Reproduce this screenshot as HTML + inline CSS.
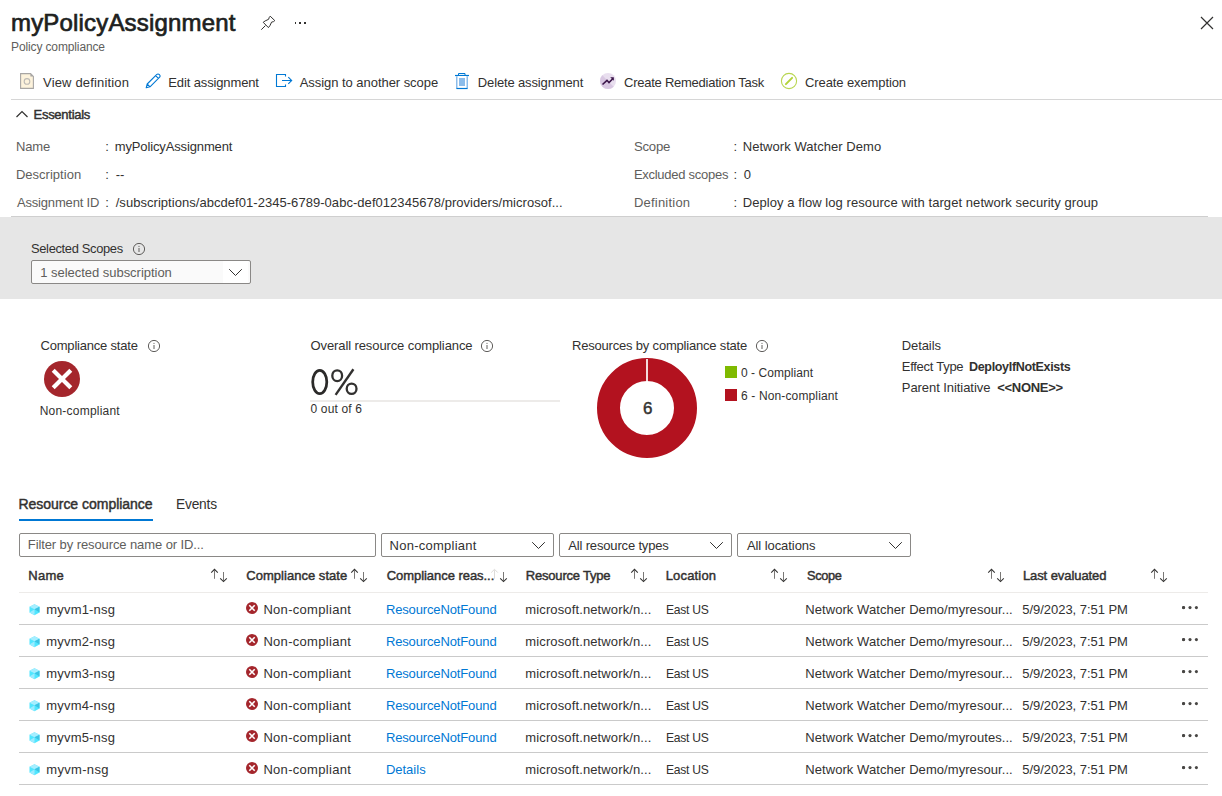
<!DOCTYPE html>
<html><head><meta charset="utf-8"><style>
html,body{margin:0;padding:0;width:1222px;height:796px;overflow:hidden;background:#fff;font-family:"Liberation Sans",sans-serif;position:relative}
.t{position:absolute;white-space:pre;line-height:normal}
.a{position:absolute}
</style></head><body>
<!-- gray band -->
<div class="a" style="left:0;top:217px;width:1222px;height:82px;background:#E6E6E6"></div>
<!-- essentials bottom line -->
<div class="a" style="left:11px;top:216px;width:1197px;height:1px;background:#CFCFCF"></div>
<!-- toolbar line -->
<div class="a" style="left:11px;top:99px;width:1211px;height:1px;background:#D6D6D6"></div>
<!-- close X -->
<svg class="a" style="left:1199px;top:15px" width="16" height="16" viewBox="0 0 16 16"><path d="M2 2L14 14M14 2L2 14" stroke="#323130" stroke-width="1.2"/></svg>
<!-- pin -->
<svg class="a" style="left:260px;top:15px" width="16" height="16" viewBox="0 0 16 16"><path d="M1.3 14.7L5.4 10.6" stroke="#323130" stroke-width="1"/><path d="M10.2 1.2L14.8 5.6L13.6 6.6L11.6 7.1L9.9 10.7L8.4 12.6L3.2 7.3L5.2 5.9L8.6 4.3L9.3 2.3Z" fill="none" stroke="#323130" stroke-width="1" stroke-linejoin="round"/></svg>
<!-- title dots -->
<div class="a" style="left:294.5px;top:22.3px;width:1.7px;height:1.7px;background:#323130"></div>
<div class="a" style="left:299.2px;top:22.3px;width:1.7px;height:1.7px;background:#323130"></div>
<div class="a" style="left:303.9px;top:22.3px;width:1.7px;height:1.7px;background:#323130"></div>
<!-- view definition icon -->
<svg class="a" style="left:19px;top:72px" width="18" height="18" viewBox="0 0 18 18"><path d="M1.6 1.6H11.6L14.4 4.4V16.4H1.6Z" fill="#FDF3DC" stroke="#A8A6A4" stroke-width="1.1"/><path d="M11.4 1.6L14.4 4.6H11.4Z" fill="#A8A6A4"/><circle cx="8" cy="9.4" r="2.8" fill="none" stroke="#BDBAB5" stroke-width="1.1"/></svg>
<!-- pencil -->
<svg class="a" style="left:145px;top:73px" width="16" height="16" viewBox="0 0 16 16"><path d="M1.2 14.8L2.2 11L11.6 1.6A1.6 1.6 0 0 1 14.4 4.4L5 13.8Z M2.2 11L5 13.8 M10.6 2.6L13.4 5.4" fill="none" stroke="#0078D4" stroke-width="1.1" stroke-linejoin="round"/></svg>
<!-- assign -->
<svg class="a" style="left:275px;top:73px" width="19" height="16" viewBox="0 0 19 16"><path d="M10.5 3.6V1.5H1.5V13.5H10.5V11.4" fill="none" stroke="#0078D4" stroke-width="1.1"/><path d="M7 7.5H16.6M13.3 4.1L16.7 7.5L13.3 10.9" fill="none" stroke="#0078D4" stroke-width="1.1"/></svg>
<!-- trash -->
<svg class="a" style="left:454px;top:72px" width="16" height="18" viewBox="0 0 16 18"><path d="M4.5 3V1.5H11V3" fill="none" stroke="#0078D4" stroke-width="1"/><path d="M1 3.5H15" stroke="#0078D4" stroke-width="1.2"/><rect x="2" y="4" width="12" height="13" rx="1" fill="#8CBCEA"/><rect x="3.5" y="4" width="9" height="12" fill="#fff"/><rect x="5" y="6" width="6" height="8" fill="#8CBCEA"/><path d="M2.5 16.5H13.5" stroke="#0078D4" stroke-width="1.2"/></svg>
<!-- remediation -->
<svg class="a" style="left:599px;top:72px" width="18" height="18" viewBox="0 0 18 18"><circle cx="9" cy="9" r="8" fill="#E9DFEF"/><path d="M3.34 3.34A8 8 0 0 0 14.66 14.66Z" fill="#D9C8E2"/><path d="M3.5 12.5L8 8.3L10 10.5L14 6.5" fill="none" stroke="#3B1549" stroke-width="1.6"/><path d="M11.2 5.2H14.8V8.8Z" fill="#3B1549"/></svg>
<!-- exemption -->
<svg class="a" style="left:780px;top:72px" width="18" height="18" viewBox="0 0 18 18"><circle cx="9" cy="9" r="7.6" fill="none" stroke="#B8D650" stroke-width="1.1"/><path d="M5.9 12.1L12.1 5.9" stroke="#B2D33A" stroke-width="2" stroke-linecap="round"/></svg>
<!-- essentials chevron -->
<svg class="a" style="left:15px;top:107.5px" width="14" height="12" viewBox="0 0 14 12"><path d="M1.5 9L7 3.5L12.5 9" fill="none" stroke="#323130" stroke-width="1.2"/></svg>
<!-- selected scopes info -->
<svg class="a" style="left:132px;top:242px" width="14" height="14" viewBox="0 0 14 14"><circle cx="7" cy="7" r="5.6" fill="none" stroke="#605E5C" stroke-width="1"/><path d="M7 6V10" stroke="#605E5C" stroke-width="1"/><circle cx="7" cy="4.3" r="0.6" fill="#605E5C"/></svg>
<!-- scope dropdown -->
<div class="a" style="left:31px;top:260px;width:218px;height:22px;border:1px solid #8A8886;border-radius:2px;background:#FAFAFA"></div>
<div class="a" style="left:223px;top:261px;width:25px;height:22px;background:#fff;border-radius:0 1px 1px 0"></div>
<svg class="a" style="left:228px;top:266px" width="16" height="12" viewBox="0 0 16 12"><path d="M1.2 3.2L7.5 9.5L13.8 3.2" fill="none" stroke="#323130" stroke-width="1"/></svg>
<!-- compliance info icons -->
<svg class="a" style="left:147px;top:339px" width="14" height="14" viewBox="0 0 14 14"><circle cx="7" cy="7" r="5.6" fill="none" stroke="#605E5C" stroke-width="1"/><path d="M7 6V10" stroke="#605E5C" stroke-width="1"/><circle cx="7" cy="4.3" r="0.6" fill="#605E5C"/></svg>
<svg class="a" style="left:480px;top:339px" width="14" height="14" viewBox="0 0 14 14"><circle cx="7" cy="7" r="5.6" fill="none" stroke="#605E5C" stroke-width="1"/><path d="M7 6V10" stroke="#605E5C" stroke-width="1"/><circle cx="7" cy="4.3" r="0.6" fill="#605E5C"/></svg>
<svg class="a" style="left:755px;top:339px" width="14" height="14" viewBox="0 0 14 14"><circle cx="7" cy="7" r="5.6" fill="none" stroke="#605E5C" stroke-width="1"/><path d="M7 6V10" stroke="#605E5C" stroke-width="1"/><circle cx="7" cy="4.3" r="0.6" fill="#605E5C"/></svg>
<!-- big error -->
<svg class="a" style="left:44px;top:361px" width="36" height="36" viewBox="0 0 36 36"><circle cx="18" cy="18" r="18" fill="#A4262C"/><path d="M9.2 9.2L26.8 26.8M26.8 9.2L9.2 26.8" stroke="#fff" stroke-width="4.2"/></svg>
<!-- progress bar -->
<div class="a" style="left:310px;top:400px;width:250px;height:2px;background:#EDEBE9"></div>
<!-- donut -->
<svg class="a" style="left:597px;top:358px" width="100" height="100" viewBox="0 0 100 100"><circle cx="50" cy="50" r="38.5" fill="none" stroke="#B3121F" stroke-width="23"/><path d="M50 1V26.5" stroke="#fff" stroke-width="1.7"/></svg>
<div class="a" style="left:725px;top:366px;width:12px;height:12px;background:#7FBA00"></div>
<div class="a" style="left:725px;top:389px;width:12px;height:12px;background:#B3121F"></div>
<!-- tab underline -->
<div class="a" style="left:19px;top:519px;width:134px;height:2px;background:#0078D4"></div>
<!-- filter inputs -->
<div class="a" style="left:19px;top:533px;width:355px;height:22px;border:1px solid #8A8886;border-radius:2px"></div>
<div class="a" style="left:381px;top:533px;width:171px;height:22px;border:1px solid #8A8886;border-radius:2px"></div>
<div class="a" style="left:559px;top:533px;width:171px;height:22px;border:1px solid #8A8886;border-radius:2px"></div>
<div class="a" style="left:737px;top:533px;width:172px;height:22px;border:1px solid #8A8886;border-radius:2px"></div>
<svg class="a" style="left:531px;top:539px" width="16" height="12" viewBox="0 0 16 12"><path d="M1.2 3.2L7.5 9.5L13.8 3.2" fill="none" stroke="#323130" stroke-width="1"/></svg>
<svg class="a" style="left:709px;top:539px" width="16" height="12" viewBox="0 0 16 12"><path d="M1.2 3.2L7.5 9.5L13.8 3.2" fill="none" stroke="#323130" stroke-width="1"/></svg>
<svg class="a" style="left:888px;top:539px" width="16" height="12" viewBox="0 0 16 12"><path d="M1.2 3.2L7.5 9.5L13.8 3.2" fill="none" stroke="#323130" stroke-width="1"/></svg>
<svg class="a" style="left:210px;top:568px" width="18" height="15" viewBox="0 0 18 15"><path d="M4.5 2.2V10.8M13.5 4V12.8" fill="none" stroke="#7A7876" stroke-width="1"/><path d="M1.2 4.6L4.5 1.3L7.8 4.6M10.2 10.3L13.5 13.6L16.8 10.3" fill="none" stroke="#323130" stroke-width="1.05"/></svg>
<svg class="a" style="left:350px;top:568px" width="18" height="15" viewBox="0 0 18 15"><path d="M4.5 2.2V10.8M13.5 4V12.8" fill="none" stroke="#7A7876" stroke-width="1"/><path d="M1.2 4.6L4.5 1.3L7.8 4.6M10.2 10.3L13.5 13.6L16.8 10.3" fill="none" stroke="#323130" stroke-width="1.05"/></svg>
<svg class="a" style="left:490px;top:568px" width="18" height="15" viewBox="0 0 18 15"><path d="M4.5 2.2V10.8M1.2 4.6L4.5 1.3L7.8 4.6" fill="none" stroke="#DDDBD9" stroke-width="1"/><path d="M13.5 4V12.8" fill="none" stroke="#7A7876" stroke-width="1"/><path d="M10.2 10.3L13.5 13.6L16.8 10.3" fill="none" stroke="#323130" stroke-width="1.05"/></svg>
<svg class="a" style="left:630px;top:568px" width="18" height="15" viewBox="0 0 18 15"><path d="M4.5 2.2V10.8M13.5 4V12.8" fill="none" stroke="#7A7876" stroke-width="1"/><path d="M1.2 4.6L4.5 1.3L7.8 4.6M10.2 10.3L13.5 13.6L16.8 10.3" fill="none" stroke="#323130" stroke-width="1.05"/></svg>
<svg class="a" style="left:770px;top:568px" width="18" height="15" viewBox="0 0 18 15"><path d="M4.5 2.2V10.8M13.5 4V12.8" fill="none" stroke="#7A7876" stroke-width="1"/><path d="M1.2 4.6L4.5 1.3L7.8 4.6M10.2 10.3L13.5 13.6L16.8 10.3" fill="none" stroke="#323130" stroke-width="1.05"/></svg>
<svg class="a" style="left:987px;top:568px" width="18" height="15" viewBox="0 0 18 15"><path d="M4.5 2.2V10.8M13.5 4V12.8" fill="none" stroke="#7A7876" stroke-width="1"/><path d="M1.2 4.6L4.5 1.3L7.8 4.6M10.2 10.3L13.5 13.6L16.8 10.3" fill="none" stroke="#323130" stroke-width="1.05"/></svg>
<svg class="a" style="left:1150px;top:568px" width="18" height="15" viewBox="0 0 18 15"><path d="M4.5 2.2V10.8M13.5 4V12.8" fill="none" stroke="#7A7876" stroke-width="1"/><path d="M1.2 4.6L4.5 1.3L7.8 4.6M10.2 10.3L13.5 13.6L16.8 10.3" fill="none" stroke="#323130" stroke-width="1.05"/></svg>
<div class="a" style="left:19px;top:592px;width:1189px;height:1px;background:#EDEBE9"></div>
<div class="a" style="left:19px;top:624px;width:1189px;height:1px;background:#CACACA"></div>
<svg class="a" style="left:29px;top:604px" width="12" height="12" viewBox="0 0 12 12"><path d="M5.5 0.3L10.5 2.8V8.6L5.5 11.2L0.5 8.6V2.8Z" fill="#50E6FF"/><path d="M0.5 2.8L5.5 5.3L10.5 2.8L5.5 0.3Z" fill="#A6EEFF"/><path d="M0.5 8.6L5.5 5.3V11.2Z" fill="#9CEBFF"/><path d="M5.5 5.3L10.5 2.8V8.6Z" fill="#3CC3E3"/></svg>
<svg class="a" style="left:246px;top:602px" width="12" height="12" viewBox="0 0 12 12"><circle cx="6" cy="6" r="6" fill="#A4262C"/><path d="M3.3 3.3L8.7 8.7M8.7 3.3L3.3 8.7" stroke="#fff" stroke-width="1.6"/></svg>
<div class="a" style="left:1182.0px;top:606px;width:3px;height:3px;border-radius:50%;background:#323130"></div>


<div class="a" style="left:19px;top:656px;width:1189px;height:1px;background:#CACACA"></div>
<svg class="a" style="left:29px;top:636px" width="12" height="12" viewBox="0 0 12 12"><path d="M5.5 0.3L10.5 2.8V8.6L5.5 11.2L0.5 8.6V2.8Z" fill="#50E6FF"/><path d="M0.5 2.8L5.5 5.3L10.5 2.8L5.5 0.3Z" fill="#A6EEFF"/><path d="M0.5 8.6L5.5 5.3V11.2Z" fill="#9CEBFF"/><path d="M5.5 5.3L10.5 2.8V8.6Z" fill="#3CC3E3"/></svg>
<svg class="a" style="left:246px;top:634px" width="12" height="12" viewBox="0 0 12 12"><circle cx="6" cy="6" r="6" fill="#A4262C"/><path d="M3.3 3.3L8.7 8.7M8.7 3.3L3.3 8.7" stroke="#fff" stroke-width="1.6"/></svg>
<div class="a" style="left:1182.0px;top:638px;width:3px;height:3px;border-radius:50%;background:#323130"></div>


<div class="a" style="left:19px;top:688px;width:1189px;height:1px;background:#CACACA"></div>
<svg class="a" style="left:29px;top:668px" width="12" height="12" viewBox="0 0 12 12"><path d="M5.5 0.3L10.5 2.8V8.6L5.5 11.2L0.5 8.6V2.8Z" fill="#50E6FF"/><path d="M0.5 2.8L5.5 5.3L10.5 2.8L5.5 0.3Z" fill="#A6EEFF"/><path d="M0.5 8.6L5.5 5.3V11.2Z" fill="#9CEBFF"/><path d="M5.5 5.3L10.5 2.8V8.6Z" fill="#3CC3E3"/></svg>
<svg class="a" style="left:246px;top:666px" width="12" height="12" viewBox="0 0 12 12"><circle cx="6" cy="6" r="6" fill="#A4262C"/><path d="M3.3 3.3L8.7 8.7M8.7 3.3L3.3 8.7" stroke="#fff" stroke-width="1.6"/></svg>
<div class="a" style="left:1182.0px;top:670px;width:3px;height:3px;border-radius:50%;background:#323130"></div>


<div class="a" style="left:19px;top:720px;width:1189px;height:1px;background:#CACACA"></div>
<svg class="a" style="left:29px;top:700px" width="12" height="12" viewBox="0 0 12 12"><path d="M5.5 0.3L10.5 2.8V8.6L5.5 11.2L0.5 8.6V2.8Z" fill="#50E6FF"/><path d="M0.5 2.8L5.5 5.3L10.5 2.8L5.5 0.3Z" fill="#A6EEFF"/><path d="M0.5 8.6L5.5 5.3V11.2Z" fill="#9CEBFF"/><path d="M5.5 5.3L10.5 2.8V8.6Z" fill="#3CC3E3"/></svg>
<svg class="a" style="left:246px;top:698px" width="12" height="12" viewBox="0 0 12 12"><circle cx="6" cy="6" r="6" fill="#A4262C"/><path d="M3.3 3.3L8.7 8.7M8.7 3.3L3.3 8.7" stroke="#fff" stroke-width="1.6"/></svg>
<div class="a" style="left:1182.0px;top:702px;width:3px;height:3px;border-radius:50%;background:#323130"></div>


<div class="a" style="left:19px;top:752px;width:1189px;height:1px;background:#CACACA"></div>
<svg class="a" style="left:29px;top:732px" width="12" height="12" viewBox="0 0 12 12"><path d="M5.5 0.3L10.5 2.8V8.6L5.5 11.2L0.5 8.6V2.8Z" fill="#50E6FF"/><path d="M0.5 2.8L5.5 5.3L10.5 2.8L5.5 0.3Z" fill="#A6EEFF"/><path d="M0.5 8.6L5.5 5.3V11.2Z" fill="#9CEBFF"/><path d="M5.5 5.3L10.5 2.8V8.6Z" fill="#3CC3E3"/></svg>
<svg class="a" style="left:246px;top:730px" width="12" height="12" viewBox="0 0 12 12"><circle cx="6" cy="6" r="6" fill="#A4262C"/><path d="M3.3 3.3L8.7 8.7M8.7 3.3L3.3 8.7" stroke="#fff" stroke-width="1.6"/></svg>
<div class="a" style="left:1182.0px;top:734px;width:3px;height:3px;border-radius:50%;background:#323130"></div>


<div class="a" style="left:19px;top:784px;width:1189px;height:1px;background:#CACACA"></div>
<svg class="a" style="left:29px;top:764px" width="12" height="12" viewBox="0 0 12 12"><path d="M5.5 0.3L10.5 2.8V8.6L5.5 11.2L0.5 8.6V2.8Z" fill="#50E6FF"/><path d="M0.5 2.8L5.5 5.3L10.5 2.8L5.5 0.3Z" fill="#A6EEFF"/><path d="M0.5 8.6L5.5 5.3V11.2Z" fill="#9CEBFF"/><path d="M5.5 5.3L10.5 2.8V8.6Z" fill="#3CC3E3"/></svg>
<svg class="a" style="left:246px;top:762px" width="12" height="12" viewBox="0 0 12 12"><circle cx="6" cy="6" r="6" fill="#A4262C"/><path d="M3.3 3.3L8.7 8.7M8.7 3.3L3.3 8.7" stroke="#fff" stroke-width="1.6"/></svg>
<div class="a" style="left:1182.0px;top:766px;width:3px;height:3px;border-radius:50%;background:#323130"></div>


<svg class="a" style="left:1180px;top:603px" width="20" height="9" viewBox="0 0 20 9"><circle cx="3.6" cy="4.6" r="1.55" fill="#484644"/><circle cx="10" cy="4.6" r="1.55" fill="#484644"/><circle cx="16.4" cy="4.6" r="1.55" fill="#484644"/></svg>
<svg class="a" style="left:1180px;top:635px" width="20" height="9" viewBox="0 0 20 9"><circle cx="3.6" cy="4.6" r="1.55" fill="#484644"/><circle cx="10" cy="4.6" r="1.55" fill="#484644"/><circle cx="16.4" cy="4.6" r="1.55" fill="#484644"/></svg>
<svg class="a" style="left:1180px;top:667px" width="20" height="9" viewBox="0 0 20 9"><circle cx="3.6" cy="4.6" r="1.55" fill="#484644"/><circle cx="10" cy="4.6" r="1.55" fill="#484644"/><circle cx="16.4" cy="4.6" r="1.55" fill="#484644"/></svg>
<svg class="a" style="left:1180px;top:699px" width="20" height="9" viewBox="0 0 20 9"><circle cx="3.6" cy="4.6" r="1.55" fill="#484644"/><circle cx="10" cy="4.6" r="1.55" fill="#484644"/><circle cx="16.4" cy="4.6" r="1.55" fill="#484644"/></svg>
<svg class="a" style="left:1180px;top:731px" width="20" height="9" viewBox="0 0 20 9"><circle cx="3.6" cy="4.6" r="1.55" fill="#484644"/><circle cx="10" cy="4.6" r="1.55" fill="#484644"/><circle cx="16.4" cy="4.6" r="1.55" fill="#484644"/></svg>
<svg class="a" style="left:1180px;top:763px" width="20" height="9" viewBox="0 0 20 9"><circle cx="3.6" cy="4.6" r="1.55" fill="#484644"/><circle cx="10" cy="4.6" r="1.55" fill="#484644"/><circle cx="16.4" cy="4.6" r="1.55" fill="#484644"/></svg>
<svg class="a" style="left:305px;top:362px" width="60" height="40" viewBox="0 0 60 40"><ellipse cx="14.75" cy="20.05" rx="7.05" ry="11.65" fill="none" stroke="#2B2A29" stroke-width="2.75"/><ellipse cx="32.2" cy="13.7" rx="4.9" ry="5.4" fill="none" stroke="#323130" stroke-width="2.3"/><ellipse cx="46.6" cy="26.75" rx="4.9" ry="5.2" fill="none" stroke="#323130" stroke-width="2.3"/><path d="M48.4 7.2L30.6 32.9" stroke="#323130" stroke-width="2.4"/></svg>

<span class="t" style="left:11.00px;top:9.08px;font-size:24px;font-weight:400;color:#201F1E;-webkit-text-stroke:0.70px #201F1E;letter-spacing:0.176px;">myPolicyAssignment</span>
<span class="t" style="left:11.00px;top:40.14px;font-size:12px;font-weight:400;color:#605E5C;letter-spacing:-0.125px;">Policy compliance</span>
<span class="t" style="left:43.10px;top:75.23px;font-size:13px;font-weight:400;color:#323130;letter-spacing:0.157px;">View definition</span>
<span class="t" style="left:168.30px;top:75.23px;font-size:13px;font-weight:400;color:#323130;letter-spacing:-0.129px;">Edit assignment</span>
<span class="t" style="left:299.70px;top:75.23px;font-size:13px;font-weight:400;color:#323130;letter-spacing:-0.045px;">Assign to another scope</span>
<span class="t" style="left:477.80px;top:75.23px;font-size:13px;font-weight:400;color:#323130;letter-spacing:-0.138px;">Delete assignment</span>
<span class="t" style="left:624.10px;top:75.23px;font-size:13px;font-weight:400;color:#323130;letter-spacing:-0.255px;">Create Remediation Task</span>
<span class="t" style="left:805.10px;top:75.23px;font-size:13px;font-weight:400;color:#323130;letter-spacing:-0.107px;">Create exemption</span>
<span class="t" style="left:33.50px;top:107.03px;font-size:13px;font-weight:400;color:#323130;-webkit-text-stroke:0.45px #323130;letter-spacing:-0.267px;">Essentials</span>
<span class="t" style="left:15.90px;top:138.94px;font-size:13px;font-weight:400;color:#605E5C;letter-spacing:-0.133px;">Name</span>
<span class="t" style="left:105.20px;top:138.94px;font-size:13px;font-weight:400;color:#323130;letter-spacing:0.000px;">:</span>
<span class="t" style="left:114.70px;top:138.94px;font-size:13px;font-weight:400;color:#323130;letter-spacing:-0.129px;">myPolicyAssignment</span>
<span class="t" style="left:15.90px;top:166.83px;font-size:13px;font-weight:400;color:#605E5C;letter-spacing:0.020px;">Description</span>
<span class="t" style="left:105.20px;top:166.83px;font-size:13px;font-weight:400;color:#323130;letter-spacing:0.000px;">:</span>
<span class="t" style="left:115.70px;top:166.83px;font-size:13px;font-weight:400;color:#323130;letter-spacing:0.000px;">--</span>
<span class="t" style="left:16.90px;top:194.94px;font-size:13px;font-weight:400;color:#605E5C;letter-spacing:-0.167px;">Assignment ID</span>
<span class="t" style="left:105.20px;top:194.94px;font-size:13px;font-weight:400;color:#323130;letter-spacing:0.000px;">:</span>
<span class="t" style="left:115.70px;top:194.94px;font-size:13px;font-weight:400;color:#323130;letter-spacing:0.044px;">/subscriptions/abcdef01-2345-6789-0abc-def012345678/providers/microsof...</span>
<span class="t" style="left:633.90px;top:138.94px;font-size:13px;font-weight:400;color:#605E5C;letter-spacing:-0.250px;transform:scaleX(1.0120);transform-origin:0 0;">Scope</span>
<span class="t" style="left:733.60px;top:138.94px;font-size:13px;font-weight:400;color:#323130;letter-spacing:0.000px;">:</span>
<span class="t" style="left:742.70px;top:138.94px;font-size:13px;font-weight:400;color:#323130;letter-spacing:0.053px;">Network Watcher Demo</span>
<span class="t" style="left:633.90px;top:166.83px;font-size:13px;font-weight:400;color:#605E5C;letter-spacing:-0.271px;">Excluded scopes</span>
<span class="t" style="left:733.60px;top:166.83px;font-size:13px;font-weight:400;color:#323130;letter-spacing:0.000px;">:</span>
<span class="t" style="left:743.70px;top:166.83px;font-size:13px;font-weight:400;color:#323130;letter-spacing:0.000px;">0</span>
<span class="t" style="left:633.90px;top:194.94px;font-size:13px;font-weight:400;color:#605E5C;letter-spacing:0.222px;">Definition</span>
<span class="t" style="left:733.60px;top:194.94px;font-size:13px;font-weight:400;color:#323130;letter-spacing:0.000px;">:</span>
<span class="t" style="left:742.70px;top:194.94px;font-size:13px;font-weight:400;color:#323130;letter-spacing:0.070px;">Deploy a flow log resource with target network security group</span>
<span class="t" style="left:31.00px;top:241.44px;font-size:13px;font-weight:400;color:#323130;letter-spacing:-0.336px;transform:scaleX(0.9924);transform-origin:0 0;">Selected Scopes</span>
<span class="t" style="left:40.20px;top:264.94px;font-size:13px;font-weight:400;color:#605E5C;letter-spacing:-0.027px;">1 selected subscription</span>
<span class="t" style="left:40.50px;top:337.94px;font-size:13px;font-weight:400;color:#323130;letter-spacing:-0.200px;">Compliance state</span>
<span class="t" style="left:39.70px;top:403.84px;font-size:12px;font-weight:400;color:#323130;letter-spacing:0.217px;">Non-compliant</span>
<span class="t" style="left:310.60px;top:337.84px;font-size:13px;font-weight:400;color:#323130;letter-spacing:-0.108px;">Overall resource compliance</span>
<span class="t" style="left:310.60px;top:402.04px;font-size:12px;font-weight:400;color:#323130;letter-spacing:0.133px;">0 out of 6</span>
<span class="t" style="left:572.00px;top:337.84px;font-size:13px;font-weight:400;color:#323130;letter-spacing:-0.193px;">Resources by compliance state</span>
<span class="t" style="left:643.00px;top:398.51px;font-size:17px;font-weight:400;color:#323130;-webkit-text-stroke:0.45px #323130;letter-spacing:0.000px;">6</span>
<span class="t" style="left:741.00px;top:366.24px;font-size:12px;font-weight:400;color:#323130;letter-spacing:0.050px;">0 - Compliant</span>
<span class="t" style="left:741.00px;top:389.14px;font-size:12px;font-weight:400;color:#323130;letter-spacing:0.137px;">6 - Non-compliant</span>
<span class="t" style="left:901.80px;top:337.84px;font-size:13px;font-weight:400;color:#323130;letter-spacing:-0.100px;">Details</span>
<span class="t" style="left:901.80px;top:359.44px;font-size:13px;font-weight:400;color:#323130;letter-spacing:-0.280px;">Effect Type</span>
<span class="t" style="left:968.90px;top:359.44px;font-size:13px;font-weight:700;color:#323130;letter-spacing:-0.350px;transform:scaleX(0.9636);transform-origin:0 0;">DeployIfNotExists</span>
<span class="t" style="left:901.80px;top:379.63px;font-size:13px;font-weight:400;color:#323130;letter-spacing:-0.062px;">Parent Initiative</span>
<span class="t" style="left:997.20px;top:379.63px;font-size:13px;font-weight:700;color:#323130;letter-spacing:-0.286px;">&lt;&lt;NONE&gt;&gt;</span>
<span class="t" style="left:18.40px;top:496.13px;font-size:14px;font-weight:400;color:#323130;-webkit-text-stroke:0.45px #323130;letter-spacing:-0.022px;">Resource compliance</span>
<span class="t" style="left:176.40px;top:496.13px;font-size:14px;font-weight:400;color:#323130;letter-spacing:-0.205px;transform:scaleX(0.9823);transform-origin:0 0;">Events</span>
<span class="t" style="left:27.80px;top:536.94px;font-size:13px;font-weight:400;color:#605E5C;letter-spacing:-0.097px;">Filter by resource name or ID...</span>
<span class="t" style="left:389.60px;top:537.63px;font-size:13px;font-weight:400;color:#323130;letter-spacing:0.250px;">Non-compliant</span>
<span class="t" style="left:568.30px;top:537.63px;font-size:13px;font-weight:400;color:#323130;letter-spacing:-0.165px;">All resource types</span>
<span class="t" style="left:746.90px;top:537.63px;font-size:13px;font-weight:400;color:#323130;letter-spacing:-0.067px;">All locations</span>
<span class="t" style="left:28.30px;top:567.63px;font-size:13px;font-weight:400;color:#323130;-webkit-text-stroke:0.45px #323130;letter-spacing:0.267px;">Name</span>
<span class="t" style="left:246.30px;top:567.63px;font-size:13px;font-weight:400;color:#323130;-webkit-text-stroke:0.45px #323130;letter-spacing:0.027px;">Compliance state</span>
<span class="t" style="left:386.70px;top:567.63px;font-size:13px;font-weight:400;color:#323130;-webkit-text-stroke:0.45px #323130;letter-spacing:-0.047px;">Compliance reas...</span>
<span class="t" style="left:525.80px;top:567.63px;font-size:13px;font-weight:400;color:#323130;-webkit-text-stroke:0.45px #323130;letter-spacing:-0.200px;">Resource Type</span>
<span class="t" style="left:665.70px;top:567.63px;font-size:13px;font-weight:400;color:#323130;-webkit-text-stroke:0.45px #323130;letter-spacing:0.171px;">Location</span>
<span class="t" style="left:806.50px;top:567.63px;font-size:13px;font-weight:400;color:#323130;-webkit-text-stroke:0.45px #323130;letter-spacing:-0.350px;transform:scaleX(0.9836);transform-origin:0 0;">Scope</span>
<span class="t" style="left:1022.90px;top:567.63px;font-size:13px;font-weight:400;color:#323130;-webkit-text-stroke:0.45px #323130;letter-spacing:-0.077px;">Last evaluated</span>
<span class="t" style="left:46.30px;top:601.74px;font-size:13px;font-weight:400;color:#323130;letter-spacing:0.175px;">myvm1-nsg</span>
<span class="t" style="left:263.40px;top:601.74px;font-size:13px;font-weight:400;color:#323130;letter-spacing:0.300px;">Non-compliant</span>
<span class="t" style="left:385.90px;top:601.74px;font-size:13px;font-weight:400;color:#0078D4;letter-spacing:-0.133px;">ResourceNotFound</span>
<span class="t" style="left:525.30px;top:601.74px;font-size:13px;font-weight:400;color:#323130;letter-spacing:0.124px;">microsoft.network/n...</span>
<span class="t" style="left:665.90px;top:601.74px;font-size:13px;font-weight:400;color:#323130;letter-spacing:-0.278px;transform:scaleX(0.9296);transform-origin:0 0;">East US</span>
<span class="t" style="left:805.30px;top:601.74px;font-size:13px;font-weight:400;color:#323130;letter-spacing:0.065px;">Network Watcher Demo/myresour...</span>
<span class="t" style="left:1022.30px;top:601.74px;font-size:13px;font-weight:400;color:#323130;letter-spacing:-0.037px;">5/9/2023, 7:51 PM</span>
<span class="t" style="left:46.30px;top:633.74px;font-size:13px;font-weight:400;color:#323130;letter-spacing:0.175px;">myvm2-nsg</span>
<span class="t" style="left:263.40px;top:633.74px;font-size:13px;font-weight:400;color:#323130;letter-spacing:0.300px;">Non-compliant</span>
<span class="t" style="left:385.90px;top:633.74px;font-size:13px;font-weight:400;color:#0078D4;letter-spacing:-0.133px;">ResourceNotFound</span>
<span class="t" style="left:525.30px;top:633.74px;font-size:13px;font-weight:400;color:#323130;letter-spacing:0.124px;">microsoft.network/n...</span>
<span class="t" style="left:665.90px;top:633.74px;font-size:13px;font-weight:400;color:#323130;letter-spacing:-0.278px;transform:scaleX(0.9296);transform-origin:0 0;">East US</span>
<span class="t" style="left:805.30px;top:633.74px;font-size:13px;font-weight:400;color:#323130;letter-spacing:0.065px;">Network Watcher Demo/myresour...</span>
<span class="t" style="left:1022.30px;top:633.74px;font-size:13px;font-weight:400;color:#323130;letter-spacing:-0.037px;">5/9/2023, 7:51 PM</span>
<span class="t" style="left:46.30px;top:665.74px;font-size:13px;font-weight:400;color:#323130;letter-spacing:0.175px;">myvm3-nsg</span>
<span class="t" style="left:263.40px;top:665.74px;font-size:13px;font-weight:400;color:#323130;letter-spacing:0.300px;">Non-compliant</span>
<span class="t" style="left:385.90px;top:665.74px;font-size:13px;font-weight:400;color:#0078D4;letter-spacing:-0.133px;">ResourceNotFound</span>
<span class="t" style="left:525.30px;top:665.74px;font-size:13px;font-weight:400;color:#323130;letter-spacing:0.124px;">microsoft.network/n...</span>
<span class="t" style="left:665.90px;top:665.74px;font-size:13px;font-weight:400;color:#323130;letter-spacing:-0.278px;transform:scaleX(0.9296);transform-origin:0 0;">East US</span>
<span class="t" style="left:805.30px;top:665.74px;font-size:13px;font-weight:400;color:#323130;letter-spacing:0.065px;">Network Watcher Demo/myresour...</span>
<span class="t" style="left:1022.30px;top:665.74px;font-size:13px;font-weight:400;color:#323130;letter-spacing:-0.037px;">5/9/2023, 7:51 PM</span>
<span class="t" style="left:46.30px;top:697.74px;font-size:13px;font-weight:400;color:#323130;letter-spacing:0.175px;">myvm4-nsg</span>
<span class="t" style="left:263.40px;top:697.74px;font-size:13px;font-weight:400;color:#323130;letter-spacing:0.300px;">Non-compliant</span>
<span class="t" style="left:385.90px;top:697.74px;font-size:13px;font-weight:400;color:#0078D4;letter-spacing:-0.133px;">ResourceNotFound</span>
<span class="t" style="left:525.30px;top:697.74px;font-size:13px;font-weight:400;color:#323130;letter-spacing:0.124px;">microsoft.network/n...</span>
<span class="t" style="left:665.90px;top:697.74px;font-size:13px;font-weight:400;color:#323130;letter-spacing:-0.278px;transform:scaleX(0.9296);transform-origin:0 0;">East US</span>
<span class="t" style="left:805.30px;top:697.74px;font-size:13px;font-weight:400;color:#323130;letter-spacing:0.065px;">Network Watcher Demo/myresour...</span>
<span class="t" style="left:1022.30px;top:697.74px;font-size:13px;font-weight:400;color:#323130;letter-spacing:-0.037px;">5/9/2023, 7:51 PM</span>
<span class="t" style="left:46.30px;top:729.74px;font-size:13px;font-weight:400;color:#323130;letter-spacing:0.175px;">myvm5-nsg</span>
<span class="t" style="left:263.40px;top:729.74px;font-size:13px;font-weight:400;color:#323130;letter-spacing:0.300px;">Non-compliant</span>
<span class="t" style="left:385.90px;top:729.74px;font-size:13px;font-weight:400;color:#0078D4;letter-spacing:-0.133px;">ResourceNotFound</span>
<span class="t" style="left:525.30px;top:729.74px;font-size:13px;font-weight:400;color:#323130;letter-spacing:0.124px;">microsoft.network/n...</span>
<span class="t" style="left:665.90px;top:729.74px;font-size:13px;font-weight:400;color:#323130;letter-spacing:-0.278px;transform:scaleX(0.9296);transform-origin:0 0;">East US</span>
<span class="t" style="left:805.30px;top:729.74px;font-size:13px;font-weight:400;color:#323130;letter-spacing:0.065px;">Network Watcher Demo/myroutes...</span>
<span class="t" style="left:1022.30px;top:729.74px;font-size:13px;font-weight:400;color:#323130;letter-spacing:-0.037px;">5/9/2023, 7:51 PM</span>
<span class="t" style="left:46.30px;top:761.74px;font-size:13px;font-weight:400;color:#323130;letter-spacing:0.314px;">myvm-nsg</span>
<span class="t" style="left:263.40px;top:761.74px;font-size:13px;font-weight:400;color:#323130;letter-spacing:0.300px;">Non-compliant</span>
<span class="t" style="left:385.90px;top:761.74px;font-size:13px;font-weight:400;color:#0078D4;letter-spacing:0.000px;">Details</span>
<span class="t" style="left:525.30px;top:761.74px;font-size:13px;font-weight:400;color:#323130;letter-spacing:0.124px;">microsoft.network/n...</span>
<span class="t" style="left:665.90px;top:761.74px;font-size:13px;font-weight:400;color:#323130;letter-spacing:-0.278px;transform:scaleX(0.9296);transform-origin:0 0;">East US</span>
<span class="t" style="left:805.30px;top:761.74px;font-size:13px;font-weight:400;color:#323130;letter-spacing:0.065px;">Network Watcher Demo/myresour...</span>
<span class="t" style="left:1022.30px;top:761.74px;font-size:13px;font-weight:400;color:#323130;letter-spacing:-0.037px;">5/9/2023, 7:51 PM</span>
</body></html>
